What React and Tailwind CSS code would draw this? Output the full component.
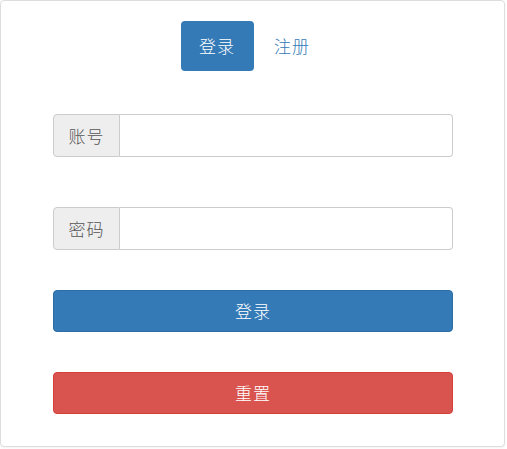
export default function App() {
  const font = { fontFamily: '"Noto Sans CJK SC", "Noto Sans", sans-serif' };
  return (
    <div className="w-[507px] h-[449px] bg-white font-light" style={font}>
      <div className="w-[505px] h-[447px] border border-[#ddd] rounded-[4px] bg-white shadow-[0_1px_2px_rgba(0,0,0,0.05)] flex flex-col">
        <div className="flex justify-center gap-[2px] pt-[20px] pl-[4px]">
          <div className="w-[73px] h-[50px] rounded-[4px] bg-[#337ab7] text-white text-[17px] tracking-[1px] flex items-center justify-center">登录</div>
          <div className="w-[73px] h-[50px] rounded-[4px] text-[#337ab7] text-[17px] tracking-[1px] flex items-center justify-center">注册</div>
        </div>
        <div className="flex flex-col pl-[52px] mt-[43px]">
          <div className="flex w-[400px] h-[43px]">
            <div className="w-[67px] h-full bg-[#eee] border border-[#ccc] rounded-l-[4px] text-[#555] text-[17px] tracking-[1px] flex items-center justify-center">账号</div>
            <div className="flex-1 h-full border border-l-0 border-[#ccc] rounded-r-[4px] bg-white"></div>
          </div>
          <div className="flex w-[400px] h-[43px] mt-[50px]">
            <div className="w-[67px] h-full bg-[#eee] border border-[#ccc] rounded-l-[4px] text-[#555] text-[17px] tracking-[1px] flex items-center justify-center">密码</div>
            <div className="flex-1 h-full border border-l-0 border-[#ccc] rounded-r-[4px] bg-white"></div>
          </div>
          <div className="w-[400px] h-[42px] mt-[40px] bg-[#337ab7] border border-[#2e6da4] rounded-[4px] text-white text-[17px] tracking-[1px] flex items-center justify-center">登录</div>
          <div className="w-[400px] h-[42px] mt-[40px] bg-[#d9534f] border border-[#d43f3a] rounded-[4px] text-white text-[17px] tracking-[1px] flex items-center justify-center">重置</div>
        </div>
      </div>
    </div>
  );
}
